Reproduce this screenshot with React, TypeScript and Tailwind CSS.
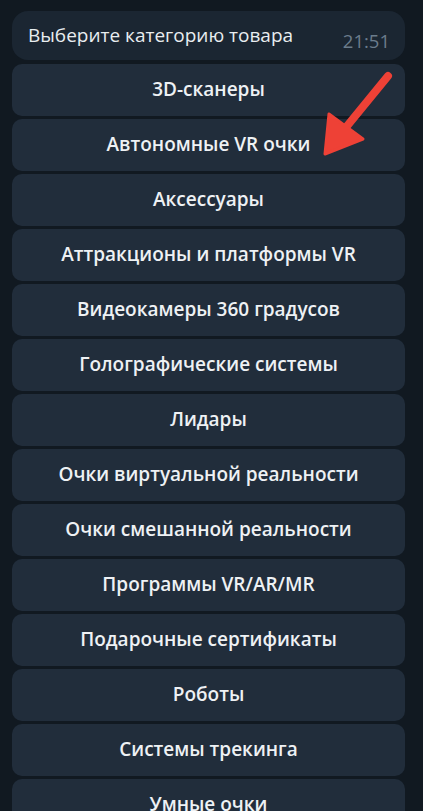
const categories = [
  '3D-сканеры',
  'Автономные VR очки',
  'Аксессуары',
  'Аттракционы и платформы VR',
  'Видеокамеры 360 градусов',
  'Голографические системы',
  'Лидары',
  'Очки виртуальной реальности',
  'Очки смешанной реальности',
  'Программы VR/AR/MR',
  'Подарочные сертификаты',
  'Роботы',
  'Системы трекинга',
  'Умные очки',
];

// красная стрелка поверх второй кнопки
const Arrow = () => (
  <svg className="absolute left-0 top-0 pointer-events-none" width="423" height="811">
    <line x1="388" y1="76" x2="343" y2="131" stroke="#ee4136" strokeWidth="8" strokeLinecap="round" />
    <polygon points="325,154 329,114 363,139" fill="#ee4136" stroke="#ee4136" strokeWidth="3" strokeLinejoin="round" />
  </svg>
);

export default function App() {
  return (
    <div
      className="relative h-[811px] w-[423px] overflow-hidden bg-[#111921]"
      style={{ fontFamily: '"Open Sans", "Noto Sans", sans-serif' }}
    >
      <div className="ml-3 flex w-[393px] flex-col gap-[3px] pt-[11px]">
        {/* Сообщение */}
        <div className="mb-[1px] flex h-[49px] shrink-0 items-start justify-between rounded-[16px] bg-[#1b2632] pl-[16px] pr-[15px]">
          <span className="pt-[12px] text-[19px] leading-[24px] text-[#e9edf0]">Выберите категорию товара</span>
          <span className="pt-[18px] text-[18.5px] leading-[24px] text-[#6b7c8c]">21:51</span>
        </div>

        {/* Кнопки */}
        {categories.map((c) => (
          <button
            key={c}
            className="flex h-[52px] shrink-0 items-center justify-center rounded-[10px] bg-[#212d3b] pb-[3px] text-[19px] font-semibold leading-[24px] text-[#eef1f4]"
          >
            {c}
          </button>
        ))}
      </div>
      <Arrow />
    </div>
  );
}
